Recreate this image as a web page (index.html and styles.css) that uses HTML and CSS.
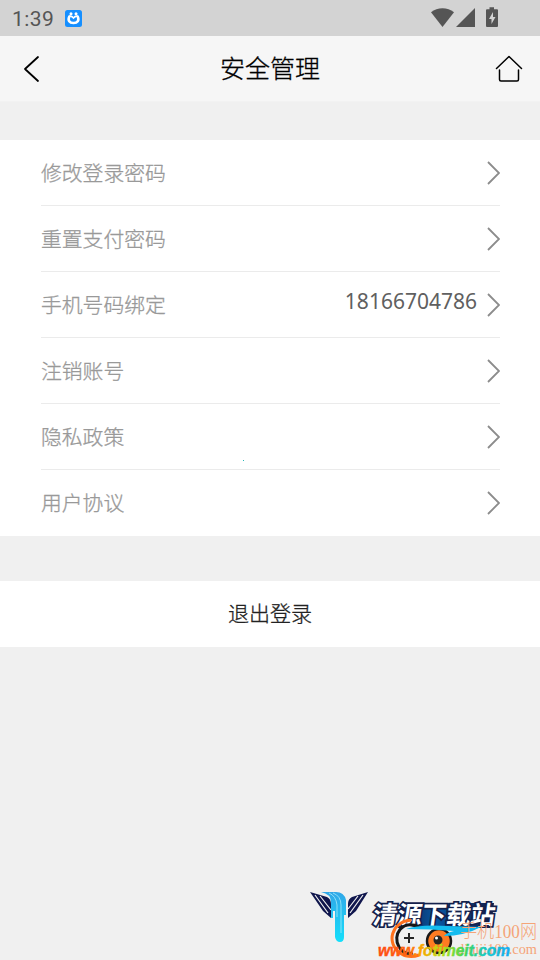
FILE: index.html
```html
<!DOCTYPE html>
<html lang="zh-CN">
<head>
<meta charset="utf-8">
<title>安全管理</title>
<link rel="stylesheet" href="styles.css">
</head>
<body>
<div class="status">
  <span class="time">1:39</span>
  <svg class="app-icon" width="17" height="17" viewBox="0 0 17 17"><rect width="17" height="17" rx="2.500" fill="#168fff"/><path d="M4.300 6.500C2.500 10.500 4.500 13 8.500 13s6-2.500 4.200-6.500" fill="none" stroke="#fff" stroke-width="2.600" stroke-linecap="round"/><path d="M4.500 6.300q2-.8 4 1.700 2-2.500 4-1.700" fill="none" stroke="#fff" stroke-width="1.600"/><circle cx="6" cy="3.700" r="1.500" fill="#fff"/><circle cx="11" cy="3.700" r="1.500" fill="#fff"/></svg>
  <svg class="signals" width="67" height="20" viewBox="0 0 67 20" fill="#555"><path d="M0 4.300C6.500-1 16.500-1 23 4.300L11.500 19z"/><path d="M44 0v19H25z"/><path d="M58.500-.8h4.500v2h3q1 0 1 1V18q0 1-1 1H56q-1 0-1-1V2.200q0-1 1-1h2.500z"/><path d="M62 4l-4 7h2.500v5l4-7H62z" fill="#d3d3d3"/></svg>
</div>
<header class="nav">
  <svg width="18" height="28" viewBox="0 0 18 28"><path d="M15 2L2 14l13 12" class="stroke"/></svg>
  <h1>安全管理</h1>
  <svg width="28" height="28" viewBox="0 0 28 28"><path d="M1.500 13.500L14 1.500l12.500 12M4.500 15v9.500q0 1.500 1.500 1.500h16q1.500 0 1.500-1.500V15" class="stroke home"/></svg>
</header>
<main>
  <ul class="list">
    <li><span>修改登录密码</span><svg class="arrow" viewBox="0 0 14 26"><path d="M2 2l11 11L2 24"/></svg></li>
    <li><span>重置支付密码</span><svg class="arrow" viewBox="0 0 14 26"><path d="M2 2l11 11L2 24"/></svg></li>
    <li><span>手机号码绑定</span><span class="phone">18166704786</span><svg class="arrow" viewBox="0 0 14 26"><path d="M2 2l11 11L2 24"/></svg></li>
    <li><span>注销账号</span><svg class="arrow" viewBox="0 0 14 26"><path d="M2 2l11 11L2 24"/></svg></li>
    <li><span>隐私政策</span><svg class="arrow" viewBox="0 0 14 26"><path d="M2 2l11 11L2 24"/></svg><i class="speck"></i></li>
    <li><span>用户协议</span><svg class="arrow" viewBox="0 0 14 26"><path d="M2 2l11 11L2 24"/></svg></li>
  </ul>
  <button class="logout">退出登录</button>
</main>
<svg class="watermark" width="240" height="80" viewBox="300 880 240 80">
  <defs>
    <linearGradient id="drip" x1="0" y1="0" x2="0" y2="1"><stop offset="0" stop-color="#31a7e8"/><stop offset="1" stop-color="#14dffb"/></linearGradient>
    <linearGradient id="url" gradientUnits="userSpaceOnUse" x1="378" y1="0" x2="510" y2="0"><stop offset="0" stop-color="#ff4b13"/><stop offset=".24" stop-color="#ff6710"/><stop offset=".32" stop-color="#ffa000"/><stop offset=".48" stop-color="#b6df18"/><stop offset=".65" stop-color="#45d653"/><stop offset=".82" stop-color="#16c9c9"/><stop offset="1" stop-color="#17aaf5"/></linearGradient>
    <linearGradient id="band"><stop offset="0" stop-color="#101c43"/><stop offset=".4" stop-color="#0757a3"/><stop offset="1" stop-color="#111b48"/></linearGradient>
  </defs>
  <path d="M310 892l17 5q4 2 4 7v14l-8-7zM368 892l-16 5q-4 2-4 7v14l8-7z" fill="#10164d"/>
  <path d="M315 895l13 18M320 896l11 14M363 895l-13 18M358 896l-10 13" stroke="#f0f0f0" stroke-width="1.200"/>
  <path d="M321 892q10 2 10 10v16h2v-7h2v26q1 5 5 5t4-5v-22h2v-15q-2-8-10-8-7 0-15 0z" fill="url(#drip)"/>
  <path d="M329 893q7 3 8 12v12M333 893q8 3 8 12v28" stroke="#a5eafa" stroke-width=".8" fill="none"/>
  <path d="M402 903h92l-3 25h-93z" fill="url(#band)"/>
  <text transform="translate(372 924) skewX(-8)" class="site-cn" textLength="122" lengthAdjust="spacingAndGlyphs">清源下载站</text>
  <circle cx="409" cy="939" r="13" fill="#f0f0f0"/>
  <path d="M411 920c-20 2-25 23-11 33q9 6 19 2" fill="none" stroke="#ff721d" stroke-width="3"/>
  <path d="M419 927c-17-8-27 8-20 20q5 8 14 6" fill="none" stroke="#161616" stroke-width="3"/>
  <path d="M409 933v10M404 938h10" stroke="#252525" stroke-width="2"/>
  <circle cx="439" cy="941" r="12" fill="#ff7b22" stroke="#191919" stroke-width="2.500"/>
  <circle cx="438" cy="940" r="4.500" fill="#252525"/><circle cx="436.500" cy="938" r="1.500" fill="#fff"/>
  <path d="M406 929q13-5 42-3l33 1q-17 9-37 9 2-3 10-5-23-2-48-2z" fill="#14bcef"/>
  <text x="460" y="938" class="mobile-name" textLength="77" lengthAdjust="spacingAndGlyphs">手机100网</text>
  <text x="457" y="954" class="mobile-url" textLength="80" lengthAdjust="spacingAndGlyphs">diniji100.com</text>
  <text x="378" y="956" class="url" textLength="132" lengthAdjust="spacingAndGlyphs">www.fotimeit.com</text>
</svg>
</body>
</html>
```
FILE: styles.css
```css
* { box-sizing: border-box; }
body { margin: 0; height: 960px; overflow: hidden; background: #f0f0f0; font-family: "Noto Sans", "Noto Sans CJK SC", sans-serif; }
svg { display: block; flex: none; }
.status { height: 36px; background: #d3d3d3; display: flex; align-items: center; padding: 0 42px 0 12px; }
.time { font: 21px/36px Roboto, sans-serif; color: #555; letter-spacing: .4px; padding-top: 2px; }
.app-icon { margin-left: 11px; }
.signals { margin-left: auto; overflow: visible; margin-bottom: 1px; }
.nav { height: 66px; background: #f6f6f6; display: flex; align-items: center; justify-content: space-between; padding: 0 17px 0 23px; border-bottom: 1px solid #f2f2f2; }
.nav h1 { margin: 0 0 3px 4px; font: 300 25px/36px "Noto Sans CJK SC", sans-serif; color: #000; -webkit-text-stroke: .3px #000; }
.stroke { fill: none; stroke: #000; stroke-width: 1.8; stroke-linecap: round; stroke-linejoin: round; }
.home { stroke-width: 1.5; }
.list { list-style: none; margin: 38px 0 45px; padding: 0 40px 0 41px; background: #fff; }
.list li { height: 66px; display: flex; align-items: center; border-bottom: 1px solid #ebebeb; color: #999; font: 300 20.8px/30px "Noto Sans CJK SC", sans-serif; position: relative; }
.list li:last-child { border-color: transparent; }
.list li span { margin-bottom: 2px; -webkit-text-stroke: .3px #999; }
.arrow { width: 14px; height: 26px; margin: 1px 0 0 auto; fill: none; stroke: #8c8c8c; stroke-width: 1.8; }
.list li .phone { margin: 0 0 8px auto; font-family: "Noto Sans", sans-serif; font-size: 21px; font-weight: 400; color: #606060; -webkit-text-stroke: 0; }
.phone + .arrow { margin-left: 9px; }
.speck { position: absolute; left: 202px; top: 56px; width: 1px; height: 1px; background: #24b7b7; }
.logout { display: block; width: 100%; height: 66px; padding: 0 0 4px; border: 0; background: #fff; color: #222; font: 300 21px/30px "Noto Sans CJK SC", sans-serif; -webkit-text-stroke: .3px #222; }
.watermark { position: absolute; left: 300px; top: 880px; }
.site-cn { font: 700 25px "Noto Sans CJK SC", sans-serif; fill: #fff; stroke: #14214c; stroke-width: 3.5px; paint-order: stroke; }
.mobile-name { font: 300 19px "Liberation Serif", "Noto Sans CJK SC", serif; fill: #f5a477; }
.mobile-url { font: 14px "Liberation Serif", serif; fill: #f5a477; }
.url { font: italic bold 17px "Liberation Sans", sans-serif; fill: url(#url); stroke: url(#url); stroke-width: .4px; }
```
